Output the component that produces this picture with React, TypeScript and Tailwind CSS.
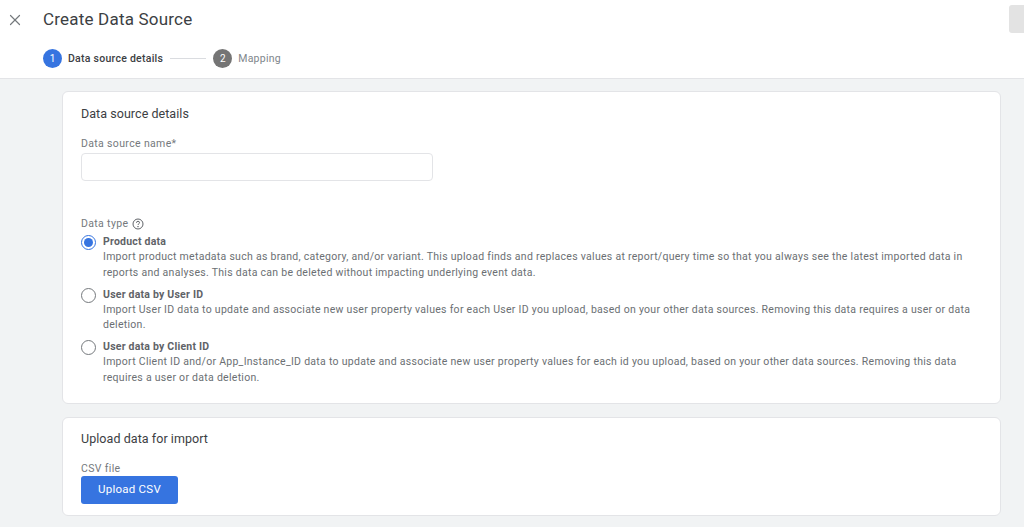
import { X } from "lucide-react";

const options = [
  {
    title: "Product data",
    checked: true,
    lines: [
      "Import product metadata such as brand, category, and/or variant. This upload finds and replaces values at report/query time so that you always see the latest imported data in",
      "reports and analyses. This data can be deleted without impacting underlying event data.",
    ],
  },
  {
    title: "User data by User ID",
    checked: false,
    lines: [
      "Import User ID data to update and associate new user property values for each User ID you upload, based on your other data sources. Removing this data requires a user or data",
      "deletion.",
    ],
  },
  {
    title: "User data by Client ID",
    checked: false,
    lines: [
      "Import Client ID and/or App_Instance_ID data to update and associate new user property values for each id you upload, based on your other data sources. Removing this data",
      "requires a user or data deletion.",
    ],
  },
];

function HelpIcon() {
  return (
    <svg width="12" height="12" viewBox="0 0 24 24" fill="none" stroke="#5f6368" strokeWidth="2" className="ml-[4px]">
      <circle cx="12" cy="12" r="10" />
      <path d="M9 9.5a3 3 0 0 1 6 0c0 2-3 2.2-3 4.5" />
      <circle cx="12" cy="17.5" r="0.6" fill="#5f6368" />
    </svg>
  );
}

export default function App() {
  return (
    <div className="h-[527px] w-[1024px] overflow-hidden bg-[#f1f3f4] font-['Roboto',sans-serif]">
      <header className="relative h-[79px] border-b border-[#e3e4e7] bg-white">
        <div className="flex h-[38px] items-center">
          <div className="flex w-[30px] justify-center pt-[2px]">
            <X className="h-[18px] w-[18px] text-[#75797d]" strokeWidth={1.6} />
          </div>
          <h1 className="ml-[13px] text-[17px] leading-[22px] tracking-[0.2px] text-[#3c4043]">Create Data Source</h1>
        </div>
        <div className="mt-[11px] flex items-center pl-[43px]">
          <span className="flex h-[19px] w-[19px] shrink-0 items-center justify-center rounded-full bg-[#3674e0] text-[10px] text-white">1</span>
          <span className="ml-[6px] text-[10.5px] font-medium tracking-[0.26px] text-[#3c4043]">Data source details</span>
          <span className="ml-[7px] h-px w-[36px] bg-[#dadce0]" />
          <span className="ml-[7px] flex h-[19px] w-[19px] shrink-0 items-center justify-center rounded-full bg-[#757575] text-[10px] text-white">2</span>
          <span className="ml-[6px] text-[10.5px] tracking-[0.26px] text-[#80868b]">Mapping</span>
        </div>
        <div className="absolute right-0 top-[5px] h-[28px] w-[15px] rounded-l-[3px] bg-[#e3e3e3]" />
      </header>

      <main className="ml-[62px] w-[939px] pt-[12px]">
        <section className="h-[313px] rounded-[6px] border border-[#e3e4e7] bg-white pl-[18px] pt-[14px]">
          <h2 className="text-[12.5px] leading-[16px] tracking-[0.05px] text-[#3c4043]">Data source details</h2>
          <label className="mt-[15px] block text-[10.5px] leading-[14px] tracking-[0.35px] text-[#75797d]">Data source name*</label>
          <input className="mt-[2px] block h-[28px] w-[352px] rounded-[4px] border border-[#e3e4e7] bg-white outline-none" />
          <div className="mt-[36px] flex items-center text-[10.5px] leading-[14px] tracking-[0.35px] text-[#75797d]">
            Data type
            <HelpIcon />
          </div>
          <div className="mt-[3px] flex flex-col gap-[6.5px]">
            {options.map((opt) => (
              <div key={opt.title} className="flex">
                <span
                  className={
                    opt.checked
                      ? "mt-[1px] flex h-[15px] w-[15px] shrink-0 items-center justify-center rounded-full border-[1.5px] border-[#3674e0]"
                      : "mt-[1px] flex h-[15px] w-[15px] shrink-0 items-center justify-center rounded-full border-[1.5px] border-[#75797d]"
                  }
                >
                  {opt.checked && <span className="h-[9px] w-[9px] rounded-full bg-[#3674e0]" />}
                </span>
                <div className="ml-[7px]">
                  <div className="text-[10.5px] font-bold leading-[15px] tracking-[0.22px] text-[#5f6368]">{opt.title}</div>
                  {opt.lines.map((line) => (
                    <div key={line} className="whitespace-nowrap text-[10.5px] leading-[15.5px] tracking-[0.28px] text-[#6b6f73]">
                      {line}
                    </div>
                  ))}
                </div>
              </div>
            ))}
          </div>
        </section>

        <section className="mt-[13px] h-[99px] rounded-[6px] border border-[#e3e4e7] bg-white pl-[18px] pt-[13px]">
          <h2 className="text-[12.5px] leading-[16px] tracking-[0.06px] text-[#3c4043]">Upload data for import</h2>
          <div className="mt-[15px] text-[10.5px] leading-[14px] tracking-[0.35px] text-[#75797d]">CSV file</div>
          <button className="mt-0 block h-[28px] w-[97px] rounded-[3px] bg-[#3674e0] text-[11.5px] tracking-[0.25px] text-white">Upload CSV</button>
        </section>
      </main>
    </div>
  );
}
